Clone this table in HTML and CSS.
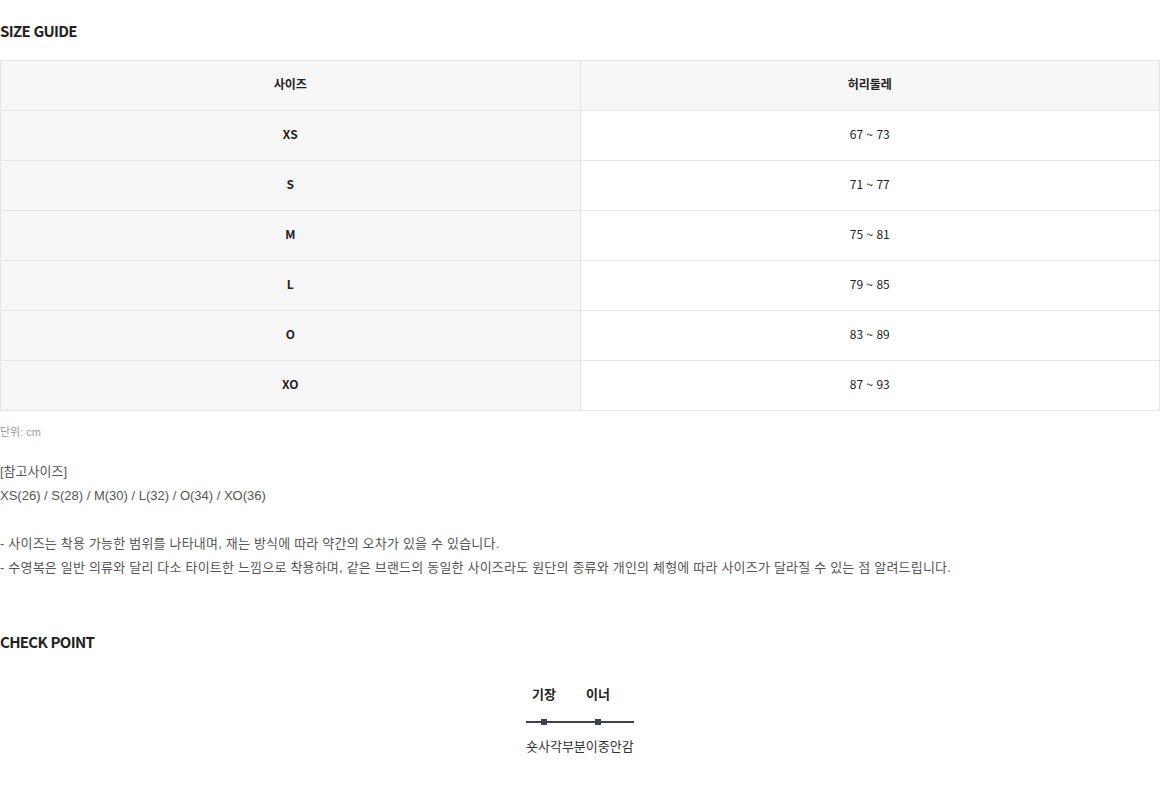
FILE: index.html
```html
<!DOCTYPE html>
<html lang="ko">
<head>
<meta charset="utf-8">
<link rel="stylesheet" href="styles.css">
</head>
<body>
<section class="guide">
  <h2 class="title">SIZE GUIDE</h2>
  <table class="size-table">
    <thead>
      <tr><th>사이즈</th><th>허리둘레</th></tr>
    </thead>
    <tbody>
      <tr><th>XS</th><td>67 ~ 73</td></tr>
      <tr><th>S</th><td>71 ~ 77</td></tr>
      <tr><th>M</th><td>75 ~ 81</td></tr>
      <tr><th>L</th><td>79 ~ 85</td></tr>
      <tr><th>O</th><td>83 ~ 89</td></tr>
      <tr><th>XO</th><td>87 ~ 93</td></tr>
    </tbody>
  </table>
  <p class="unit">단위: cm</p>
  <div class="notes">
    <p>[참고사이즈]</p>
    <p>XS(26) / S(28) / M(30) / L(32) / O(34) / XO(36)</p>
    <p class="blank">&nbsp;</p>
    <p class="kr">- 사이즈는 착용 가능한 범위를 나타내며, 재는 방식에 따라 약간의 오차가 있을 수 있습니다.</p>
    <p class="kr">- 수영복은 일반 의류와 달리 다소 타이트한 느낌으로 착용하며, 같은 브랜드의 동일한 사이즈라도 원단의 종류와 개인의 체형에 따라 사이즈가 달라질 수 있는 점 알려드립니다.</p>
  </div>
</section>
<section class="check">
  <h2 class="title">CHECK POINT</h2>
  <div class="points">
    <div class="labels">
      <span class="label">기장</span>
      <span class="label">이너</span>
    </div>
    <div class="track">
      <span class="mark"></span>
      <span class="mark"></span>
    </div>
    <p class="desc">숏사각부분이중안감</p>
  </div>
</section>
</body>
</html>
```
FILE: styles.css
```css
html, body {
  margin: 0;
  padding: 0;
  background: #fff;
}
body {
  width: 1160px;
  font-family: "Noto Sans CJK KR", "Noto Sans", sans-serif;
  color: #222;
}
.guide {
  padding-top: 20px;
}
.title {
  margin: 0;
  font-size: 15px;
  line-height: 22px;
  font-weight: 700;
  color: #222;
  letter-spacing: -0.7px;
}
.guide .title {
  margin-bottom: 18px;
}
.size-table {
  width: 1160px;
  border-collapse: collapse;
  table-layout: fixed;
}
.size-table th,
.size-table td {
  height: 45px;
  padding: 0 0 4px;
  border: 1px solid #e5e5e5;
  text-align: center;
  font-size: 12px;
  line-height: 16px;
  color: #222;
}
.size-table th {
  background: #f6f6f6;
  font-weight: 700;
}
.size-table td {
  background: #fff;
  font-weight: 400;
}
.unit {
  margin: 13px 0 0;
  font-size: 11px;
  line-height: 16px;
  color: #999;
  font-family: "Liberation Sans", "Noto Sans CJK KR", sans-serif;
}
.notes {
  margin-top: 20px;
  font-family: "Liberation Sans", "Noto Sans CJK KR", sans-serif;
  font-size: 13px;
  line-height: 24px;
  color: #555;
}
.notes p {
  margin: 0;
}
.notes .kr {
  letter-spacing: 0.2px;
}
.check {
  margin-top: 51px;
}
.points {
  width: 108px;
  margin: 32px auto 0;
}
.labels {
  display: flex;
  gap: 18px;
}
.label {
  width: 36px;
  text-align: center;
  font-size: 13px;
  line-height: 18px;
  font-weight: 700;
  color: #222;
}
.track {
  position: relative;
  display: flex;
  gap: 18px;
  margin-top: 16px;
  height: 6px;
  align-items: center;
}
.track::before {
  content: "";
  position: absolute;
  left: 0;
  right: 0;
  top: 2px;
  height: 2px;
  background: #3d4350;
}
.mark {
  position: relative;
  width: 36px;
  height: 6px;
}
.mark::after {
  content: "";
  position: absolute;
  left: 15px;
  top: 0;
  width: 6px;
  height: 6px;
  background: #3d4350;
}
.desc {
  margin: 12px 0 0;
  font-size: 13px;
  line-height: 18px;
  color: #333;
  white-space: nowrap;
}
```
